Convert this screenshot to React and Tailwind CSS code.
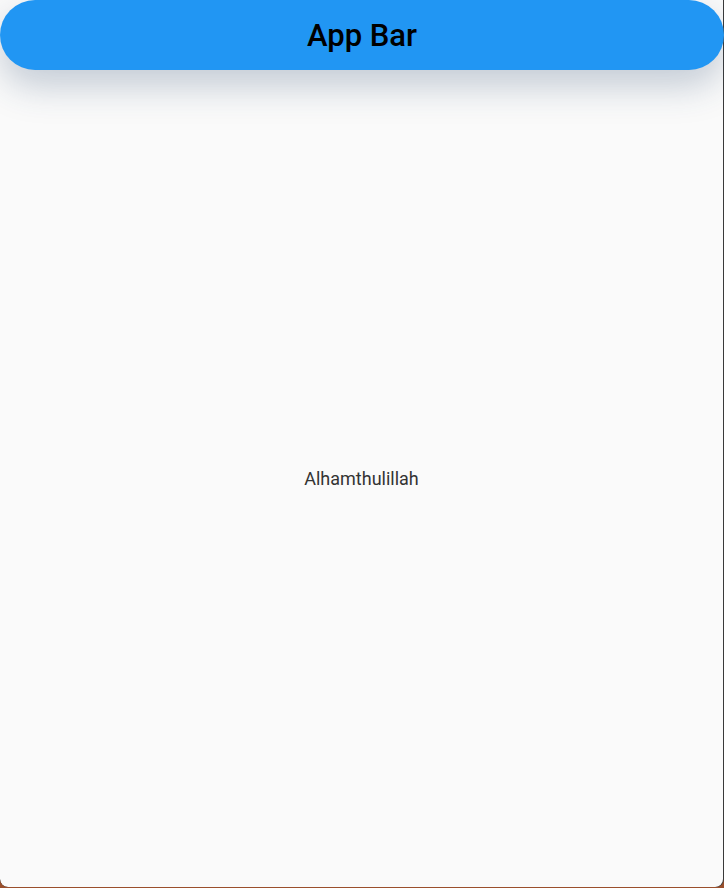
import React from 'react';

const App = () => {
  return (
    <div className="w-[724px] h-[888px] bg-[#9a4f2c] flex flex-col overflow-hidden" style={{ fontFamily: 'Roboto, "Noto Sans", sans-serif' }}>
      <div className="flex-1 bg-[#3a3a3a] rounded-b-[8px] overflow-hidden pr-px">
        <div className="relative h-full bg-[#fafafa] rounded-b-[8px] flex flex-col">
          <header className="relative z-10 h-[70px] w-[724px] bg-[#2196f3] rounded-[35px] flex items-center justify-center shadow-[0_16px_36px_rgba(40,70,110,0.26)]">
            <h1 className="text-[31px] font-medium text-black leading-none">App Bar</h1>
          </header>
          <main className="flex-1 flex items-center justify-center">
            <p className="text-[18px] font-normal text-[#333333]">Alhamthulillah</p>
          </main>
        </div>
      </div>
      <div className="h-px" />
    </div>
  );
};

export default App;
